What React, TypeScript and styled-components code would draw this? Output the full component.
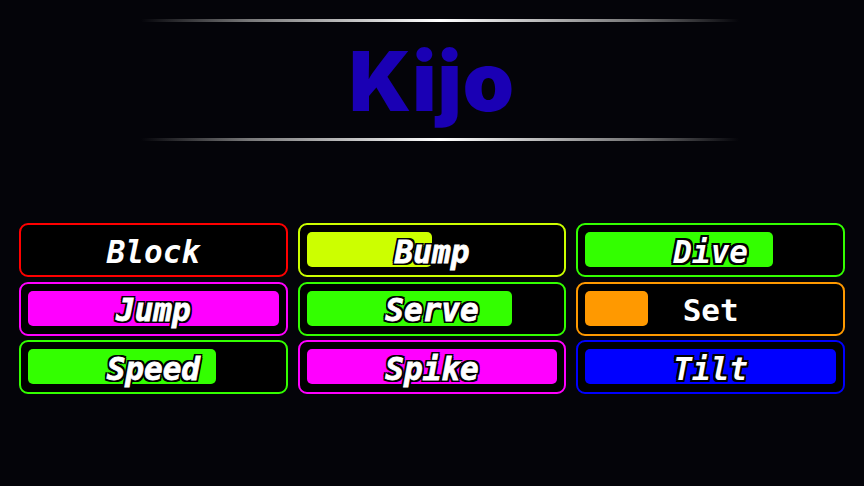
import styled, { createGlobalStyle, css } from 'styled-components'

const GlobalStyle = createGlobalStyle`
  html, body {
    margin: 0;
    padding: 0;
    background: #040409;
  }
`

type Face = 'plain' | 'heavy'

type Skill = {
  name: string
  color: string
  level: number
  face: Face
  slant: boolean
}

const skills: Skill[] = [
  { name: 'Block', color: '#ff0000', level: 0, face: 'plain', slant: true },
  { name: 'Bump', color: '#ccff00', level: 50, face: 'heavy', slant: true },
  { name: 'Dive', color: '#33ff00', level: 75, face: 'plain', slant: true },
  { name: 'Jump', color: '#ff00ff', level: 100, face: 'heavy', slant: true },
  { name: 'Serve', color: '#33ff00', level: 82, face: 'heavy', slant: true },
  { name: 'Set', color: '#ff9900', level: 25, face: 'plain', slant: false },
  { name: 'Speed', color: '#33ff00', level: 75, face: 'heavy', slant: true },
  { name: 'Spike', color: '#ff00ff', level: 100, face: 'heavy', slant: true },
  { name: 'Tilt', color: '#0000ff', level: 100, face: 'plain', slant: true },
]

const Page = styled.div`
  min-height: 100vh;
  background: #040409;
  padding-top: 19px;
  box-sizing: border-box;
`

const HeaderWrap = styled.div`
  display: flex;
  justify-content: center;
  padding-left: 16px;
`

const Header = styled.header`
  width: 598px;
  display: flex;
  flex-direction: column;
`

const Rule = styled.div`
  height: 3px;
  background: linear-gradient(
    90deg,
    rgba(255, 255, 255, 0) 0%,
    rgba(140, 140, 140, 0.85) 18%,
    #ffffff 50%,
    rgba(140, 140, 140, 0.85) 82%,
    rgba(255, 255, 255, 0) 100%
  );
`

const Title = styled.h1`
  margin: 0;
  height: 116px;
  padding-right: 16px;
  padding-top: 3px;
  box-sizing: border-box;
  display: flex;
  align-items: center;
  justify-content: center;
  font-family: Inter, 'Noto Sans', sans-serif;
  font-weight: 900;
  font-size: 82px;
  letter-spacing: 1px;
  color: #1a00b4;
`

const Grid = styled.div`
  display: grid;
  grid-template-columns: repeat(3, 1fr);
  column-gap: 10px;
  row-gap: 4.5px;
  padding: 0 19px;
  margin-top: 82px;
`

const Card = styled.div<{ $color: string }>`
  position: relative;
  height: 54px;
  box-sizing: border-box;
  border: 2px solid ${(p) => p.$color};
  border-radius: 9px;
  background: #000;
  padding: 7px;
`

const Bar = styled.div<{ $color: string }>`
  height: 35px;
  border-radius: 5px;
  background: ${(p) => p.$color};
`

const Label = styled.span<{ $face: Face; $slant: boolean }>`
  position: absolute;
  inset: 0;
  padding-top: 3px;
  display: flex;
  align-items: center;
  justify-content: center;
  color: #fff;
  font-family: 'DejaVu Sans Mono', monospace;
  font-size: 31px;
  font-style: ${(p) => (p.$slant ? 'italic' : 'normal')};
  font-weight: 700;
  text-shadow:
    -2px -2px 0 #000, 0 -2px 0 #000, 2px -2px 0 #000,
    -2px 0 0 #000, 2px 0 0 #000,
    -2px 2px 0 #000, 0 2px 0 #000, 2px 2px 0 #000;
  ${(p) =>
    p.$face === 'heavy' &&
    css`
      -webkit-text-stroke: 0.8px #fff;
    `}
`

export default function App() {
  return (
    <Page>
      <GlobalStyle />
      <HeaderWrap>
        <Header>
          <Rule />
          <Title>Kijo</Title>
          <Rule />
        </Header>
      </HeaderWrap>
      <Grid>
        {skills.map((s) => (
          <Card key={s.name} $color={s.color}>
            {s.level > 0 && <Bar $color={s.color} style={{ width: `${s.level}%` }} />}
            <Label $face={s.face} $slant={s.slant}>
              {s.name}
            </Label>
          </Card>
        ))}
      </Grid>
    </Page>
  )
}
